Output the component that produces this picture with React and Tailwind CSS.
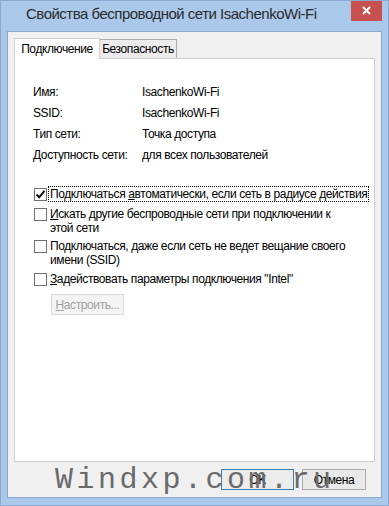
import React from "react";

const ui = { fontFamily: '"Liberation Sans", Arial, sans-serif' };

function Box({ checked }) {
  return (
    <div className="w-[13px] h-[13px] shrink-0 border border-[#707070] bg-white flex items-center justify-center">
      {checked && (
        <svg width="11" height="11" viewBox="0 0 11 11">
          <path d="M1.5 5.5 L4.2 8.3 L9.5 1.8" fill="none" stroke="#111" strokeWidth="2" />
        </svg>
      )}
    </div>
  );
}

function Check({ checked, children, focus, className = "" }) {
  return (
    <div className={"flex items-start " + className}>
      <div className="mt-[1px]">
        <Box checked={checked} />
      </div>
      <div
        className={
          "ml-[2px] pl-[1px] leading-[14px] text-[12px] text-[#000] whitespace-nowrap " +
          (focus ? "outline outline-1 outline-dotted outline-[#000] pr-[1px]" : "")
        }
      >
        {children}
      </div>
    </div>
  );
}

export default function App() {
  return (
    <div
      className="w-[389px] h-[506px] bg-[#aac8ea] border border-[#8aa8d0] flex flex-col relative overflow-hidden tracking-[-0.4px]"
      style={ui}
    >
      {/* title bar */}
      <div className="h-[30px] shrink-0 flex items-center justify-start relative pl-[25px]">
        <span className="text-[15px] text-[#2b2b2b] -mt-[4px] whitespace-nowrap tracking-[-0.5px]">
          Свойства беспроводной сети IsachenkoWi-Fi
        </span>
        <div className="absolute right-[6px] top-[-1px] w-[31px] h-[21px] bg-[#c75050] flex items-center justify-center">
          <svg width="9" height="9" viewBox="0 0 9 9">
            <path d="M1 1 L8 8 M8 1 L1 8" stroke="#fff" strokeWidth="2" />
          </svg>
        </div>
      </div>

      {/* client */}
      <div className="flex-1 mx-[6px] mb-[7px] bg-[#f0f0f0] border border-[#8ea8cb] flex flex-col pt-[6px] px-[6px]">
        {/* tabs */}
        <div className="flex items-end h-[20px] relative z-10">
          <div className="h-[21px] w-[86px] bg-white border border-b-0 border-[#cfcfcf] flex items-center justify-center text-[12px] text-black -mb-[1px] whitespace-nowrap">
            Подключение
          </div>
          <div className="h-[19px] w-[77px] bg-[#ececec] border border-b-0 border-l-0 border-[#acacac] flex items-center justify-center text-[12px] text-black whitespace-nowrap">
            Безопасность
          </div>
        </div>

        {/* panel */}
        <div className="h-[404px] bg-white border border-[#cfcfcf] flex flex-col pl-[18px] pt-[24px] text-[12px] text-black">
          <div className="flex flex-col gap-[4px]">
            {[
              ["Имя:", "IsachenkoWi-Fi"],
              ["SSID:", "IsachenkoWi-Fi"],
              ["Тип сети:", "Точка доступа"],
              ["Доступность сети:", "для всех пользователей"],
            ].map(([a, b]) => (
              <div key={a} className="flex h-[17px] items-center">
                <span className="w-[109px]">{a}</span>
                <span>{b}</span>
              </div>
            ))}
          </div>

          <div className="flex flex-col mt-[24px] pl-[1px]">
            <Check checked focus>
              Подключаться <u>а</u>втоматически, если сеть в радиусе действия
            </Check>
            <Check className="mt-[6px]">
              <u>И</u>скать другие беспроводные сети при подключении к
              <br />
              этой сети
            </Check>
            <Check className="mt-[4px]">
              По<u>д</u>ключаться, даже если сеть не ведет вещание своего
              <br />
              имени (SSID)
            </Check>
            <Check className="mt-[5px]">
              <u>З</u>адействовать параметры подключения "Intel"
            </Check>
            <div className="ml-[17px] mt-[8px] w-[73px] h-[21px] border border-[#d9d9d9] bg-[#f4f4f4] flex items-center justify-center text-[12px] text-[#a0a0a0] whitespace-nowrap">
              <span>
                <u>Н</u>астроить...
              </span>
            </div>
          </div>
        </div>

        {/* buttons */}
        <div className="flex justify-end gap-[8px] mt-[7px] pr-[9px]">
          <div className="w-[73px] h-[21px] border border-[#3c7fb1] bg-[#ececec] flex items-center justify-center text-[12px] text-black">
            OK
          </div>
          <div className="w-[64px] h-[21px] border border-[#acacac] bg-[#e9e9e9] flex items-center justify-center text-[12px] text-black">
            Отмена
          </div>
        </div>
      </div>

      {/* watermark */}
      <div
        className="absolute left-[54px] top-[464px] text-[30px] leading-[30px] text-[#6a6a6a] pointer-events-none tracking-[3.5px] whitespace-nowrap"
        style={{ fontFamily: '"Liberation Mono", "Courier New", monospace' }}
      >
        Windxp.com.ru
      </div>
    </div>
  );
}
